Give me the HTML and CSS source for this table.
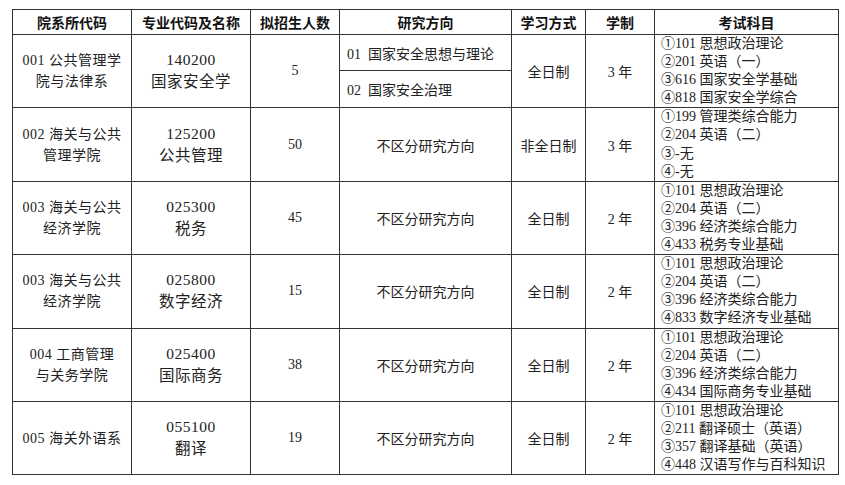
FILE: index.html
```html
<!DOCTYPE html>
<html lang="zh-CN">
<head>
<meta charset="utf-8">
<link rel="stylesheet" href="styles.css">
</head>
<body>
<table class="tbl">
  <colgroup>
    <col class="c1"><col class="c2"><col class="c3"><col class="c4"><col class="c5"><col class="c6"><col class="c7">
  </colgroup>
  <thead>
    <tr class="hd">
      <th>院系所代码</th><th>专业代码及名称</th><th>拟招生人数</th><th>研究方向</th><th>学习方式</th><th>学制</th><th>考试科目</th>
    </tr>
  </thead>
  <tbody>
    <tr class="sub1">
      <td rowspan="2" class="dept">001 公共管理学<br>院与法律系</td>
      <td rowspan="2" class="major">140200<br>国家安全学</td>
      <td rowspan="2">5</td>
      <td class="dir">01&nbsp; 国家安全思想与理论</td>
      <td rowspan="2">全日制</td>
      <td rowspan="2">3 年</td>
      <td rowspan="2" class="exam">①101 思想政治理论<br>②201 英语（一）<br>③616 国家安全学基础<br>④818 国家安全学综合</td>
    </tr>
    <tr class="sub2">
      <td class="dir">02&nbsp; 国家安全治理</td>
    </tr>
    <tr class="row">
      <td class="dept">002 海关与公共<br>管理学院</td>
      <td class="major">125200<br>公共管理</td>
      <td>50</td>
      <td>不区分研究方向</td>
      <td>非全日制</td>
      <td>3 年</td>
      <td class="exam">①199 管理类综合能力<br>②204 英语（二）<br>③-无<br>④-无</td>
    </tr>
    <tr class="row">
      <td class="dept">003 海关与公共<br>经济学院</td>
      <td class="major">025300<br>税务</td>
      <td>45</td>
      <td>不区分研究方向</td>
      <td>全日制</td>
      <td>2 年</td>
      <td class="exam">①101 思想政治理论<br>②204 英语（二）<br>③396 经济类综合能力<br>④433 税务专业基础</td>
    </tr>
    <tr class="row">
      <td class="dept">003 海关与公共<br>经济学院</td>
      <td class="major">025800<br>数字经济</td>
      <td>15</td>
      <td>不区分研究方向</td>
      <td>全日制</td>
      <td>2 年</td>
      <td class="exam">①101 思想政治理论<br>②204 英语（二）<br>③396 经济类综合能力<br>④833 数字经济专业基础</td>
    </tr>
    <tr class="row">
      <td class="dept">004 工商管理<br>与关务学院</td>
      <td class="major">025400<br>国际商务</td>
      <td>38</td>
      <td>不区分研究方向</td>
      <td>全日制</td>
      <td>2 年</td>
      <td class="exam">①101 思想政治理论<br>②204 英语（二）<br>③396 经济类综合能力<br>④434 国际商务专业基础</td>
    </tr>
    <tr class="row">
      <td class="dept">005 海关外语系</td>
      <td class="major">055100<br>翻译</td>
      <td>19</td>
      <td>不区分研究方向</td>
      <td>全日制</td>
      <td>2 年</td>
      <td class="exam">①101 思想政治理论<br>②211 翻译硕士（英语）<br>③357 翻译基础（英语）<br>④448 汉语写作与百科知识</td>
    </tr>
  </tbody>
</table>
</body>
</html>
```

FILE: styles.css
```css
html, body {
  margin: 0;
  padding: 0;
  background: #ffffff;
}
body {
  padding: 9px 0 0 12px;
  font-family: "Liberation Serif", "Noto Sans CJK SC", serif;
  color: #222222;
  font-size: 14px;
}
.tbl {
  border-collapse: collapse;
  table-layout: fixed;
  width: 826px;
  border: 1.5px solid #555555;
}
.c1 { width: 119px; }
.c2 { width: 119px; }
.c3 { width: 89px; }
.c4 { width: 172px; }
.c5 { width: 74px; }
.c6 { width: 69px; }
.c7 { width: 184px; }
.tbl th, .tbl td {
  border: 1px solid #333333;
  padding: 0;
  text-align: center;
  vertical-align: middle;
  font-weight: normal;
}
.hd th {
  height: 24px;
  font-family: "Noto Sans CJK SC", sans-serif;
  font-weight: 700;
  font-size: 14px;
  color: #111111;
  line-height: 18px;
}
.sub1 td { height: 35px; }
.sub2 td { height: 36px; }
.row td { height: 72px; }
.dept {
  line-height: 21px;
  letter-spacing: 0.5px;
}
.major {
  font-size: 15.5px;
  line-height: 22px;
  letter-spacing: 0.5px;
}
.dir {
  text-align: left !important;
  padding-left: 7px !important;
}
.tbl td.exam {
  text-align: left;
  vertical-align: top;
  padding: 0 0 0 6px;
  line-height: 18.1px;
  font-size: 14px;
  white-space: nowrap;
}
```
